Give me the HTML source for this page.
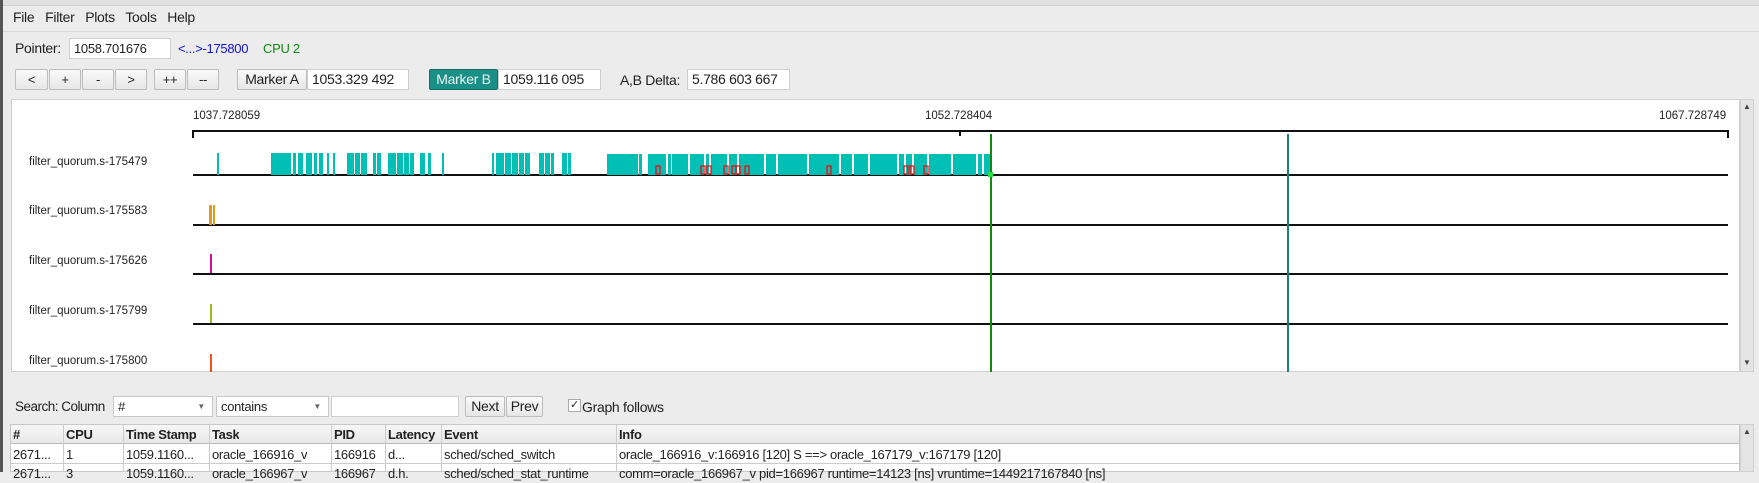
<!DOCTYPE html>
<html><head><meta charset="utf-8"><style>
*{box-sizing:border-box;margin:0;padding:0}
body{width:1759px;height:472px;background:#ececec;font-family:"Liberation Sans",sans-serif;font-size:13px;color:#222;position:relative;overflow:hidden;letter-spacing:-0.3px}
.a{position:absolute;white-space:nowrap}
.inp{position:absolute;background:#fff;border:1px solid #cfcfcf;height:21px;line-height:19px;padding-left:4px;font-size:13px}
.btn{position:absolute;height:21px;line-height:19px;border:1px solid #bdbdbd;border-radius:2px;background:linear-gradient(#fafafa,#e6e6e6);text-align:center;font-size:13px}
.th,.td{position:absolute;line-height:19px;font-size:13px;padding-left:3px;white-space:nowrap;overflow:hidden}
.th{font-weight:bold}
svg text{letter-spacing:0}
</style></head><body>
<div class="a" style="left:0;top:0;width:1759px;height:6px;background:#e0e0e0;border-bottom:1px solid #cfcfcf"></div>
<div class="a" style="left:0;top:0;width:3px;height:472px;background:#555"></div>
<div class="a" style="top:8px;left:13px;font-size:14px;line-height:18px">File&nbsp;&nbsp; Filter&nbsp;&nbsp; Plots&nbsp;&nbsp; Tools&nbsp;&nbsp; Help</div>
<div class="a" style="left:3px;top:31px;width:1756px;height:1px;background:#d8d8d8"></div>
<div class="a" style="top:39px;left:15px;line-height:18px;font-size:14px">Pointer:</div>
<div class="inp" style="left:69px;top:38px;width:102px">1058.701676</div>
<div class="a" style="top:40px;left:178px;color:#1010e0;line-height:18px">&lt;...&gt;-175800</div>
<div class="a" style="top:40px;left:263px;color:#118811;line-height:18px">CPU 2</div>
<div class="btn" style="left:15px;top:69px;width:33px">&lt;</div>
<div class="btn" style="left:49px;top:69px;width:32px">+</div>
<div class="btn" style="left:82px;top:69px;width:32px">-</div>
<div class="btn" style="left:115px;top:69px;width:32px">&gt;</div>
<div class="btn" style="left:154px;top:69px;width:32px">++</div>
<div class="btn" style="left:187px;top:69px;width:32px">--</div>
<div class="btn" style="left:237px;top:69px;width:70px;font-size:14px">Marker A</div>
<div class="inp" style="left:307px;top:69px;width:102px;font-size:14px">1053.329 492</div>
<div class="btn" style="left:429px;top:69px;width:69px;background:#1a8f86;border-color:#136e66;color:#e8f5f3;font-size:14px">Marker B</div>
<div class="inp" style="left:498px;top:69px;width:103px;font-size:14px">1059.116 095</div>
<div class="a" style="left:620px;top:71px;font-size:14px;line-height:18px">A,B Delta:</div>
<div class="inp" style="left:687px;top:69px;width:103px;font-size:14px">5.786 603 667</div>

<div class="a" style="left:11px;top:99px;width:1729px;height:273px;background:#fff;border:1px solid #d0d0d0"></div>
<div class="a" style="left:1740px;top:99px;width:14px;height:273px;background:#e4e4e4;border:1px solid #d0d0d0"></div>
<div class="a" style="left:1743px;top:102px;font-size:8px;color:#444">▲</div>
<div class="a" style="left:1743px;top:358px;font-size:8px;color:#444">▼</div>
<svg class="a" style="left:0;top:0" width="1740" height="372">
<g font-family="Liberation Sans,sans-serif" font-size="11.5" fill="#222">
<text x="193" y="119">1037.728059</text>
<text x="925" y="119">1052.728404</text>
<text x="1659" y="119">1067.728749</text>
<text x="29" y="165">filter_quorum.s-175479</text>
<text x="29" y="214">filter_quorum.s-175583</text>
<text x="29" y="264">filter_quorum.s-175626</text>
<text x="29" y="314">filter_quorum.s-175799</text>
<text x="29" y="364">filter_quorum.s-175800</text>
</g>
<g stroke="#111" stroke-width="2" fill="none">
<path d="M193 138V131H1728V138"/><path d="M960 131V136"/>
<path d="M193 175H1728M193 225H1728M193 274H1728M193 324H1728"/>
</g>
<g fill="#00bfb4">
<rect x="217" y="153" width="2" height="22"/>
<rect x="271" y="153" width="20" height="22"/>
<rect x="293" y="153" width="3" height="22"/><rect x="298" y="153" width="5" height="22"/><rect x="306" y="153" width="6" height="22"/><rect x="314" y="153" width="3" height="22"/><rect x="319" y="153" width="4" height="22"/><rect x="327" y="153" width="2" height="22"/><rect x="333" y="153" width="2" height="22"/>
<rect x="347" y="153" width="7" height="22"/><rect x="355" y="153" width="5" height="22"/><rect x="361" y="153" width="6" height="22"/><rect x="373" y="153" width="3" height="22"/><rect x="377" y="153" width="4" height="22"/>
<rect x="388" y="153" width="8" height="22"/><rect x="397" y="153" width="6" height="22"/><rect x="404" y="153" width="5" height="22"/><rect x="410" y="153" width="4" height="22"/><rect x="420" y="153" width="5" height="22"/><rect x="428" y="153" width="3" height="22"/><rect x="442" y="153" width="2" height="22"/>
<rect x="492" y="153" width="2" height="22"/><rect x="496" y="153" width="8" height="22"/><rect x="505" y="153" width="6" height="22"/><rect x="512" y="153" width="6" height="22"/><rect x="519" y="153" width="5" height="22"/><rect x="525" y="153" width="5" height="22"/>
<rect x="539" y="153" width="5" height="22"/><rect x="545" y="153" width="5" height="22"/><rect x="551" y="153" width="3" height="22"/><rect x="562" y="153" width="5" height="22"/><rect x="568" y="153" width="3" height="22"/>
<rect x="607" y="154" width="31" height="21"/><rect x="639" y="154" width="3" height="21"/><rect x="648" y="154" width="18" height="21"/><rect x="668" y="154" width="3" height="21"/><rect x="672" y="154" width="16" height="21"/><rect x="690" y="154" width="14" height="21"/><rect x="706" y="154" width="3" height="21"/><rect x="711" y="154" width="16" height="21"/><rect x="729" y="154" width="8" height="21"/><rect x="739" y="154" width="25" height="21"/><rect x="766" y="154" width="10" height="21"/><rect x="778" y="154" width="29" height="21"/><rect x="809" y="154" width="30" height="21"/><rect x="841" y="154" width="11" height="21"/><rect x="854" y="154" width="14" height="21"/><rect x="870" y="154" width="27" height="21"/><rect x="899" y="154" width="5" height="21"/><rect x="906" y="154" width="6" height="21"/><rect x="914" y="154" width="13" height="21"/><rect x="929" y="154" width="22" height="21"/><rect x="953" y="154" width="23" height="21"/><rect x="978" y="154" width="4" height="21"/><rect x="984" y="154" width="6" height="21"/>
<rect x="1287" y="134" width="2" height="41"/>
</g>
<g fill="none" stroke="#f01010" stroke-width="1.3">
<rect x="656" y="166" width="4" height="8"/><rect x="701" y="166" width="4" height="8"/><rect x="707" y="166" width="4" height="8"/><rect x="724" y="166" width="4" height="8"/><rect x="732" y="166" width="4" height="8"/><rect x="736" y="166" width="4" height="8"/><rect x="745" y="166" width="4" height="8"/><rect x="827" y="166" width="4" height="8"/><rect x="904" y="166" width="4" height="8"/><rect x="910" y="166" width="4" height="8"/><rect x="924" y="166" width="4" height="8"/>
</g>
<rect x="209" y="205" width="3" height="20" fill="#e09a20"/><rect x="213" y="205" width="2" height="20" fill="#e09a20"/>
<rect x="210" y="254" width="2" height="19" fill="#d01090"/>
<rect x="210" y="304" width="2" height="19" fill="#a0b820"/>
<rect x="210" y="354" width="2" height="18" fill="#f05020"/>
<rect x="990" y="134" width="2" height="238" fill="#118811"/>
<rect x="988" y="172" width="5" height="5" fill="#20e040"/>
<rect x="1287" y="134" width="2" height="238" fill="#168080"/>
</svg>

<div class="a" style="top:398px;left:15px;font-size:13.5px;line-height:18px;letter-spacing:-0.5px">Search: Column</div>
<div class="inp" style="left:113px;top:396px;width:100px;border-color:#c8c8c8">#<span style="position:absolute;right:7px;font-size:8px;color:#666">▼</span></div>
<div class="inp" style="left:216px;top:396px;width:113px;border-color:#c8c8c8">contains<span style="position:absolute;right:7px;font-size:8px;color:#666">▼</span></div>
<div class="inp" style="left:331px;top:396px;width:128px"></div>
<div class="btn" style="left:465px;top:396px;width:40px;font-size:14px">Next</div>
<div class="btn" style="left:506px;top:396px;width:37px;font-size:14px">Prev</div>
<div class="a" style="left:568px;top:399px;width:13px;height:13px;background:#fff;border:1px solid #aaa;font-size:11px;line-height:11px;text-align:center">✓</div>
<div class="a" style="left:582px;top:398px;font-size:14px;line-height:18px">Graph follows</div>

<div class="a" style="left:10px;top:424px;width:1730px;height:48px;background:#fff;border:1px solid #c8c8c8"></div>
<div class="a" style="left:11px;top:425px;width:1728px;height:19px;background:linear-gradient(#f7f7f7,#e8e8e8);border-bottom:1px solid #bbb"></div>
<div class="a" style="left:11px;top:463px;width:1728px;height:1px;background:#ccc"></div>
<div class="a" style="left:1740px;top:424px;width:14px;height:48px;background:#e4e4e4;border:1px solid #d0d0d0"></div>
<div class="a" style="left:1743px;top:427px;font-size:8px;color:#444">▲</div>
<div style="position:absolute;left:0;top:425px">
<div class="a" style="left:63px;top:0;width:1px;height:47px;background:#ccc"></div>
<div class="a" style="left:123px;top:0;width:1px;height:47px;background:#ccc"></div>
<div class="a" style="left:209px;top:0;width:1px;height:47px;background:#ccc"></div>
<div class="a" style="left:331px;top:0;width:1px;height:47px;background:#ccc"></div>
<div class="a" style="left:385px;top:0;width:1px;height:47px;background:#ccc"></div>
<div class="a" style="left:441px;top:0;width:1px;height:47px;background:#ccc"></div>
<div class="a" style="left:616px;top:0;width:1px;height:47px;background:#ccc"></div>
<div class="th" style="left:10px;top:0">#</div><div class="th" style="left:63px;top:0">CPU</div><div class="th" style="left:123px;top:0">Time Stamp</div><div class="th" style="left:209px;top:0">Task</div><div class="th" style="left:331px;top:0">PID</div><div class="th" style="left:385px;top:0">Latency</div><div class="th" style="left:441px;top:0">Event</div><div class="th" style="left:616px;top:0">Info</div>
<div class="td" style="left:10px;top:20px">2671...</div><div class="td" style="left:63px;top:20px">1</div><div class="td" style="left:123px;top:20px">1059.1160...</div><div class="td" style="left:209px;top:20px">oracle_166916_v</div><div class="td" style="left:331px;top:20px">166916</div><div class="td" style="left:385px;top:20px">d...</div><div class="td" style="left:441px;top:20px">sched/sched_switch</div><div class="td" style="left:616px;top:20px">oracle_166916_v:166916 [120] S ==&gt; oracle_167179_v:167179 [120]</div>
<div class="td" style="left:10px;top:39px">2671...</div><div class="td" style="left:63px;top:39px">3</div><div class="td" style="left:123px;top:39px">1059.1160...</div><div class="td" style="left:209px;top:39px">oracle_166967_v</div><div class="td" style="left:331px;top:39px">166967</div><div class="td" style="left:385px;top:39px">d.h.</div><div class="td" style="left:441px;top:39px">sched/sched_stat_runtime</div><div class="td" style="left:616px;top:39px">comm=oracle_166967_v pid=166967 runtime=14123 [ns] vruntime=1449217167840 [ns]</div>
</div>
</body></html>
